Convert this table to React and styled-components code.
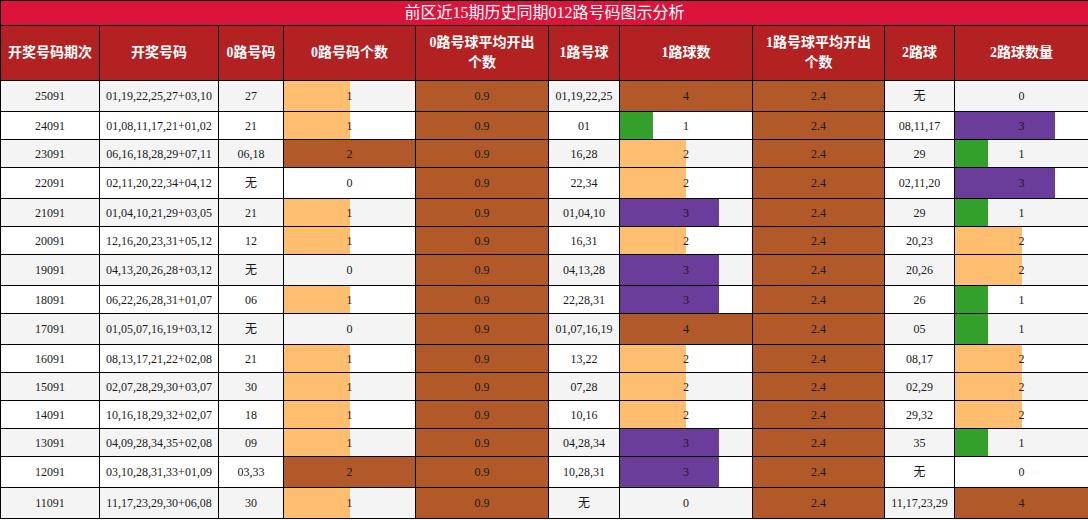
import React from 'react';
import styled, { createGlobalStyle } from 'styled-components';

const GlobalStyle = createGlobalStyle`
  html, body {
    margin: 0;
    padding: 0;
    background: #fff;
  }
  body {
    font-family: "Liberation Serif", "Noto Sans CJK SC", serif;
  }
`;

const COLORS = {
  0.25: '#33a02c',
  0.5: '#fdbf6f',
  0.75: '#6a3d9a',
  1: '#b15928',
};

const Table = styled.table`
  width: 1088px;
  table-layout: fixed;
  border-collapse: collapse;
  font-family: "Liberation Serif", "Noto Sans CJK SC", serif;
`;

const TitleCell = styled.th`
  background: #dc143c;
  color: #fff;
  font-size: 16px;
  font-weight: normal;
  line-height: 20px;
  height: 24px;
  padding: 0;
  border: 1px solid #000;
  text-align: center;
`;

const HeadCell = styled.th`
  background: #b22222;
  color: #fff;
  font-size: 14px;
  font-weight: bold;
  line-height: 20px;
  height: 54px;
  padding: 0 2px;
  border: 1px solid #000;
  text-align: center;
`;

const Row = styled.tr`
  height: ${(p) => (p.$tall ? 31 : 28)}px;
  background: ${(p) => (p.$alt ? '#f4f4f4' : '#fff')};
`;

const Cell = styled.td`
  position: relative;
  font-size: 12px;
  line-height: 14px;
  color: #1a1a1a;
  padding: 0 2px;
  border: 1px solid #000;
  text-align: center;
  white-space: nowrap;
`;

const Bar = styled.div`
  position: absolute;
  left: 0;
  top: 0;
  bottom: 0;
  background: ${(p) => p.$color};
`;

const Label = styled.span`
  position: relative;
`;

const columns = [
  { title: ['开奖号码期次'], width: 99 },
  { title: ['开奖号码'], width: 119 },
  { title: ['0路号码'], width: 65 },
  { title: ['0路号码个数'], width: 132 },
  { title: ['0路号球平均开出', '个数'], width: 133 },
  { title: ['1路号球'], width: 71 },
  { title: ['1路球数'], width: 133 },
  { title: ['1路号球平均开出', '个数'], width: 132 },
  { title: ['2路球'], width: 70 },
  { title: ['2路球数量'], width: 134 },
];

const rows = [
  ['25091', '01,19,22,25,27+03,10', '27', 1, '01,19,22,25', 4, '无', 0],
  ['24091', '01,08,11,17,21+01,02', '21', 1, '01', 1, '08,11,17', 3],
  ['23091', '06,16,18,28,29+07,11', '06,18', 2, '16,28', 2, '29', 1],
  ['22091', '02,11,20,22,34+04,12', '无', 0, '22,34', 2, '02,11,20', 3],
  ['21091', '01,04,10,21,29+03,05', '21', 1, '01,04,10', 3, '29', 1],
  ['20091', '12,16,20,23,31+05,12', '12', 1, '16,31', 2, '20,23', 2],
  ['19091', '04,13,20,26,28+03,12', '无', 0, '04,13,28', 3, '20,26', 2],
  ['18091', '06,22,26,28,31+01,07', '06', 1, '22,28,31', 3, '26', 1],
  ['17091', '01,05,07,16,19+03,12', '无', 0, '01,07,16,19', 4, '05', 1],
  ['16091', '08,13,17,21,22+02,08', '21', 1, '13,22', 2, '08,17', 2],
  ['15091', '02,07,28,29,30+03,07', '30', 1, '07,28', 2, '02,29', 2],
  ['14091', '10,16,18,29,32+02,07', '18', 1, '10,16', 2, '29,32', 2],
  ['13091', '04,09,28,34,35+02,08', '09', 1, '04,28,34', 3, '35', 1],
  ['12091', '03,10,28,31,33+01,09', '03,33', 2, '10,28,31', 3, '无', 0],
  ['11091', '11,17,23,29,30+06,08', '30', 1, '无', 0, '11,17,23,29', 4],
];

function BarCell({ value, max }) {
  const ratio = value / max;
  return (
    <Cell>
      {value > 0 && <Bar $color={COLORS[ratio]} style={{ width: `${ratio * 100}%` }} />}
      <Label>{value}</Label>
    </Cell>
  );
}

export default function App() {
  return (
    <>
      <GlobalStyle />
      <Table>
        <colgroup>
          {columns.map((c) => (
            <col key={c.title.join('')} style={{ width: c.width }} />
          ))}
        </colgroup>
        <thead>
          <tr>
            <TitleCell colSpan={10}>前区近15期历史同期012路号码图示分析</TitleCell>
          </tr>
          <tr>
            {columns.map((c) => (
              <HeadCell key={c.title.join('')}>
                {c.title.map((line, i) => (
                  <React.Fragment key={line}>
                    {i > 0 && <br />}
                    {line}
                  </React.Fragment>
                ))}
              </HeadCell>
            ))}
          </tr>
        </thead>
        <tbody>
          {rows.map((r, i) => (
            <Row key={r[0]} $alt={i % 2 === 0} $tall={r.includes('无')}>
              <Cell>{r[0]}</Cell>
              <Cell>{r[1]}</Cell>
              <Cell>{r[2]}</Cell>
              <BarCell value={r[3]} max={2} />
              <BarCell value={0.9} max={0.9} />
              <Cell>{r[4]}</Cell>
              <BarCell value={r[5]} max={4} />
              <BarCell value={2.4} max={2.4} />
              <Cell>{r[6]}</Cell>
              <BarCell value={r[7]} max={4} />
            </Row>
          ))}
        </tbody>
      </Table>
    </>
  );
}
